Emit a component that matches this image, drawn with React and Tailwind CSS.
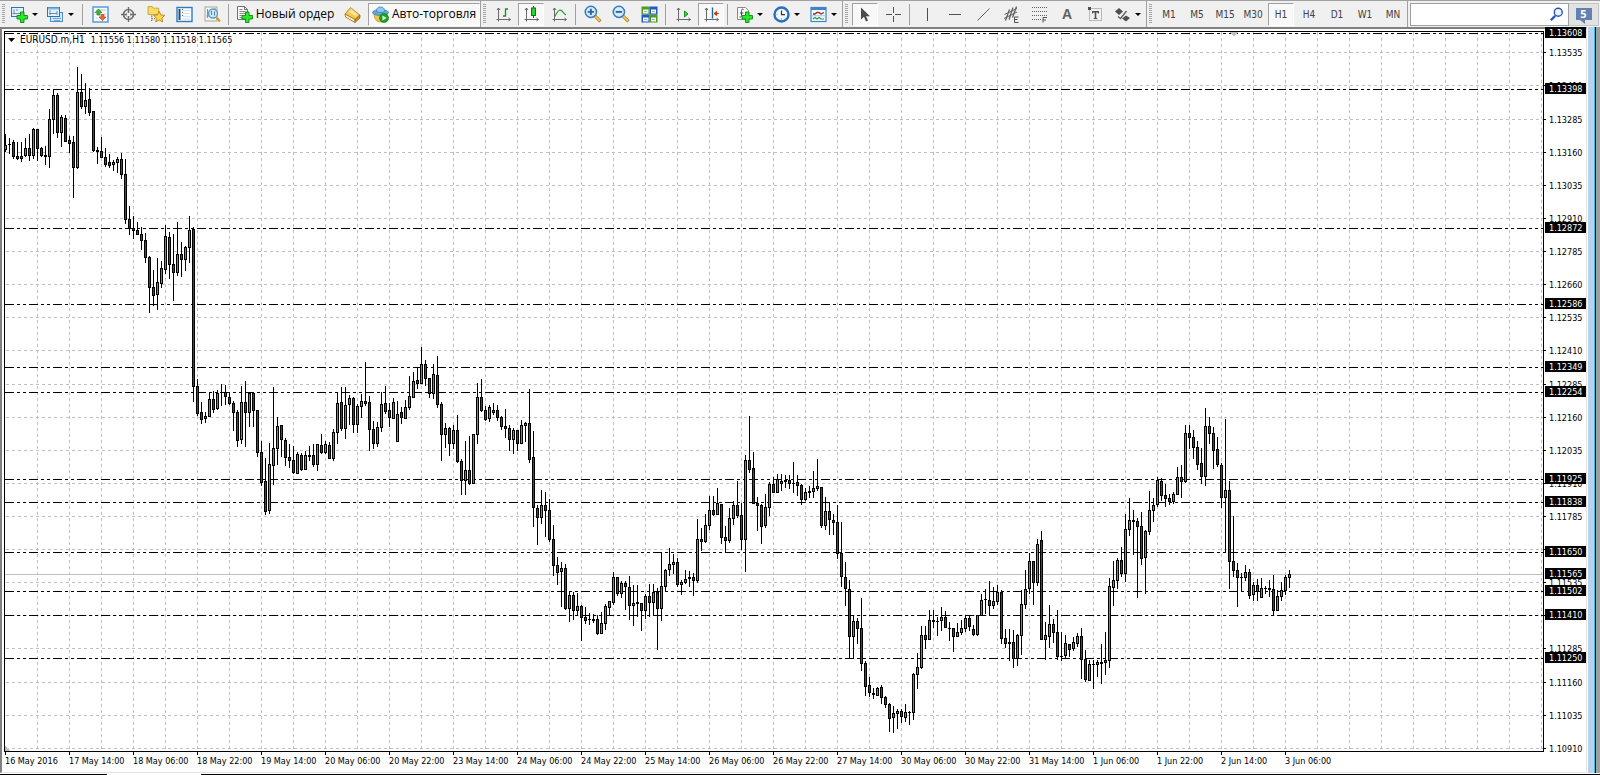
import clsx from "clsx";

const UI_FONT = "font-['Open_Sans','Noto_Sans',sans-serif]";
const CHART_FONT = "font-['DejaVu_Sans_Condensed','DejaVu_Sans',sans-serif]";

// Plot origin on the canvas, all bar values below are canvas pixels
const LEFT = 5;
const TOP = 32;
const BAR_STEP = 4;

// [high, body top, body bottom, low, up]
const BARS = [
    [134, 145, 149, 151, 1], [138, 144, 144, 153, 0], [140, 142, 156, 158, 0], [142, 156, 158, 159, 0],
    [142, 156, 158, 161, 1], [138, 148, 155, 156, 1], [134, 148, 155, 160, 0], [128, 129, 155, 158, 1],
    [129, 129, 148, 160, 0], [147, 148, 155, 156, 0], [146, 155, 156, 164, 0], [109, 119, 156, 167, 1],
    [89, 95, 119, 133, 1], [93, 95, 132, 137, 0], [115, 117, 132, 146, 1], [115, 118, 141, 141, 0],
    [136, 140, 143, 152, 0], [136, 142, 167, 197, 0], [67, 92, 167, 168, 1], [74, 92, 106, 108, 0],
    [83, 100, 106, 113, 1], [88, 99, 112, 115, 0], [111, 111, 150, 151, 0], [147, 150, 151, 163, 0],
    [137, 151, 157, 157, 0], [148, 157, 164, 166, 0], [154, 162, 165, 167, 0], [160, 162, 164, 170, 1],
    [157, 159, 162, 172, 1], [153, 159, 174, 178, 0], [159, 174, 219, 223, 0], [206, 219, 228, 234, 0],
    [216, 228, 230, 238, 0], [222, 230, 234, 234, 0], [227, 234, 240, 249, 0], [233, 240, 257, 262, 0],
    [256, 257, 287, 312, 0], [270, 287, 295, 305, 0], [258, 282, 294, 309, 1], [261, 268, 283, 287, 1],
    [225, 236, 269, 273, 1], [232, 237, 264, 278, 0], [234, 264, 272, 300, 0], [222, 254, 272, 275, 1],
    [242, 254, 259, 276, 0], [246, 247, 259, 270, 1], [216, 230, 247, 262, 1], [227, 229, 386, 401, 0],
    [379, 386, 413, 415, 0], [402, 412, 419, 423, 0], [412, 416, 418, 422, 1], [392, 399, 416, 416, 1],
    [391, 399, 409, 412, 0], [390, 393, 408, 409, 1], [384, 392, 392, 405, 0], [385, 392, 396, 404, 0],
    [393, 397, 403, 404, 0], [401, 403, 412, 430, 0], [410, 412, 440, 446, 0], [386, 402, 439, 443, 1],
    [381, 402, 412, 446, 0], [393, 393, 412, 426, 1], [392, 393, 410, 426, 0], [410, 410, 452, 456, 0],
    [441, 452, 482, 485, 0], [458, 481, 511, 514, 0], [443, 464, 510, 513, 1], [387, 448, 465, 484, 1],
    [417, 426, 448, 464, 1], [425, 425, 439, 456, 0], [438, 440, 457, 465, 0], [444, 457, 460, 467, 0],
    [446, 460, 472, 473, 0], [452, 454, 473, 473, 1], [453, 455, 469, 470, 0], [451, 455, 469, 469, 1],
    [446, 455, 456, 460, 0], [444, 455, 464, 466, 0], [444, 444, 464, 470, 1], [434, 445, 452, 453, 0],
    [441, 444, 452, 453, 1], [442, 445, 458, 458, 0], [429, 432, 458, 460, 1], [392, 403, 432, 443, 1],
    [387, 402, 428, 430, 0], [387, 405, 428, 438, 1], [395, 398, 404, 424, 1], [397, 398, 424, 432, 0],
    [404, 406, 424, 432, 1], [394, 401, 406, 417, 1], [362, 401, 403, 405, 0], [396, 402, 429, 450, 0],
    [421, 429, 443, 448, 0], [422, 427, 443, 446, 1], [392, 404, 427, 431, 1], [386, 403, 411, 413, 0],
    [403, 410, 417, 426, 0], [398, 402, 418, 418, 1], [401, 414, 441, 441, 1], [407, 412, 417, 423, 0],
    [400, 407, 418, 418, 1], [376, 396, 407, 409, 1], [372, 381, 397, 397, 1], [368, 380, 383, 388, 0],
    [347, 364, 383, 383, 1], [360, 364, 378, 385, 0], [378, 378, 393, 397, 0], [364, 374, 393, 398, 1],
    [356, 375, 404, 407, 0], [402, 404, 434, 460, 0], [423, 428, 434, 447, 1], [427, 428, 443, 455, 0],
    [425, 430, 443, 448, 1], [415, 430, 461, 462, 0], [459, 461, 480, 494, 0], [441, 470, 480, 494, 1],
    [436, 470, 483, 484, 0], [434, 434, 483, 483, 1], [383, 397, 434, 443, 1], [379, 397, 410, 411, 0],
    [406, 410, 419, 420, 0], [405, 407, 418, 421, 1], [403, 410, 412, 414, 1], [405, 410, 417, 420, 0],
    [416, 417, 426, 429, 0], [409, 426, 428, 437, 0], [425, 428, 439, 450, 0], [428, 430, 439, 453, 1],
    [430, 430, 443, 450, 0], [420, 425, 443, 443, 1], [422, 423, 425, 441, 1], [389, 423, 459, 462, 0],
    [431, 457, 507, 526, 0], [505, 508, 517, 544, 0], [490, 505, 517, 523, 1], [492, 505, 510, 536, 0],
    [499, 510, 539, 541, 0], [525, 539, 565, 575, 0], [557, 565, 572, 584, 0], [562, 568, 571, 606, 1],
    [564, 568, 608, 609, 0], [591, 595, 608, 621, 1], [592, 595, 610, 619, 0], [593, 606, 610, 615, 1],
    [605, 606, 617, 640, 0], [607, 617, 620, 623, 0], [613, 619, 619, 624, 0], [614, 619, 620, 622, 0],
    [615, 619, 633, 634, 0], [612, 623, 633, 633, 1], [604, 606, 623, 629, 1], [601, 601, 607, 615, 1],
    [572, 577, 602, 604, 1], [577, 577, 593, 595, 0], [581, 583, 593, 597, 1], [581, 583, 586, 609, 0],
    [576, 587, 605, 619, 0], [585, 603, 605, 625, 1], [585, 602, 603, 616, 0], [603, 603, 610, 630, 0],
    [594, 596, 610, 618, 1], [584, 596, 602, 616, 0], [584, 592, 602, 615, 1], [588, 592, 608, 649, 0],
    [552, 586, 608, 620, 1], [569, 570, 586, 591, 1], [548, 564, 569, 575, 1], [554, 562, 564, 573, 1],
    [558, 562, 584, 586, 0], [580, 582, 584, 594, 1], [570, 579, 582, 583, 1], [571, 577, 578, 586, 0],
    [573, 577, 580, 595, 0], [519, 539, 580, 582, 1], [528, 539, 541, 550, 0], [514, 525, 541, 542, 1],
    [496, 510, 525, 529, 1], [496, 510, 514, 515, 0], [488, 503, 514, 514, 1], [504, 504, 537, 543, 0],
    [526, 537, 540, 551, 0], [508, 518, 540, 542, 1], [501, 505, 518, 524, 1], [481, 505, 515, 517, 0],
    [503, 515, 539, 549, 0], [455, 460, 539, 571, 1], [416, 460, 469, 472, 0], [452, 468, 503, 503, 0],
    [497, 503, 505, 530, 0], [504, 505, 526, 543, 0], [494, 507, 525, 527, 1], [482, 484, 507, 515, 1],
    [477, 484, 492, 492, 0], [474, 479, 492, 492, 1], [474, 481, 483, 490, 1], [475, 480, 481, 487, 0],
    [475, 480, 483, 488, 0], [462, 483, 483, 492, 0], [475, 482, 485, 495, 0], [484, 485, 499, 504, 0],
    [488, 492, 499, 500, 1], [486, 491, 492, 497, 0], [471, 488, 491, 497, 1], [459, 486, 488, 490, 1],
    [487, 487, 525, 527, 0], [497, 511, 525, 529, 1], [502, 511, 519, 534, 0], [514, 520, 522, 534, 0],
    [505, 522, 553, 558, 0], [522, 553, 576, 586, 0], [562, 577, 588, 605, 0], [580, 589, 636, 658, 0],
    [615, 621, 636, 658, 1], [618, 621, 628, 643, 0], [598, 628, 663, 670, 0], [661, 663, 686, 695, 0],
    [677, 685, 692, 696, 0], [688, 693, 694, 698, 0], [687, 688, 695, 695, 1], [685, 687, 697, 703, 0],
    [696, 697, 704, 707, 0], [703, 704, 718, 731, 0], [706, 713, 717, 732, 1], [709, 711, 713, 728, 1],
    [709, 711, 716, 722, 0], [704, 712, 717, 721, 1], [711, 712, 712, 724, 0], [673, 674, 712, 719, 1],
    [653, 667, 674, 688, 1], [626, 635, 667, 668, 1], [626, 635, 639, 648, 0], [610, 620, 639, 639, 1],
    [610, 620, 621, 627, 0], [617, 621, 621, 635, 0], [607, 617, 620, 630, 1], [611, 617, 627, 627, 0],
    [622, 628, 628, 640, 0], [628, 628, 636, 651, 0], [623, 632, 636, 636, 1], [620, 628, 632, 634, 1],
    [615, 618, 628, 631, 1], [615, 618, 626, 630, 0], [625, 629, 634, 635, 0], [615, 615, 634, 635, 1],
    [594, 600, 615, 615, 1], [589, 599, 599, 613, 0], [581, 600, 605, 615, 0], [587, 601, 605, 608, 1],
    [585, 592, 601, 604, 1], [590, 592, 638, 643, 0], [629, 638, 643, 647, 0], [629, 642, 643, 660, 0],
    [630, 642, 658, 667, 0], [634, 635, 658, 665, 1], [590, 604, 635, 654, 1], [570, 589, 604, 608, 1],
    [553, 561, 588, 593, 1], [561, 561, 582, 604, 0], [539, 544, 582, 585, 1], [531, 540, 639, 639, 0],
    [622, 635, 639, 659, 1], [605, 624, 636, 647, 1], [619, 624, 632, 642, 0], [610, 632, 656, 659, 0],
    [632, 656, 656, 660, 0], [635, 643, 655, 657, 1], [644, 644, 649, 656, 0], [637, 642, 648, 650, 1],
    [633, 636, 643, 646, 1], [628, 636, 659, 678, 0], [650, 659, 679, 681, 0], [660, 664, 680, 680, 1],
    [660, 664, 664, 688, 0], [660, 662, 664, 676, 1], [644, 662, 663, 683, 0], [632, 660, 662, 674, 1],
    [578, 586, 660, 667, 1], [561, 580, 587, 605, 1], [558, 560, 580, 588, 1], [547, 560, 573, 576, 0],
    [514, 529, 573, 581, 1], [498, 520, 529, 535, 1], [510, 520, 521, 554, 0], [518, 521, 526, 597, 0],
    [512, 526, 558, 564, 0], [530, 531, 557, 593, 1], [491, 510, 531, 534, 1], [498, 505, 510, 521, 1],
    [477, 480, 504, 506, 1], [478, 481, 495, 500, 0], [484, 495, 498, 506, 0], [494, 498, 501, 504, 0],
    [492, 494, 501, 503, 1], [467, 477, 494, 494, 1], [465, 477, 481, 497, 0], [425, 433, 481, 482, 1],
    [425, 433, 437, 448, 0], [430, 437, 447, 458, 0], [441, 447, 464, 469, 0], [448, 463, 476, 483, 0],
    [408, 426, 476, 485, 1], [417, 426, 433, 443, 0], [427, 433, 450, 468, 0], [437, 449, 464, 466, 0],
    [463, 465, 497, 507, 0], [419, 490, 497, 552, 1], [481, 490, 561, 588, 0], [516, 561, 570, 576, 0],
    [563, 570, 577, 606, 0], [573, 577, 577, 591, 0], [565, 572, 577, 580, 1], [569, 572, 595, 598, 0],
    [582, 585, 594, 600, 1], [579, 585, 591, 600, 0], [578, 588, 597, 597, 1], [586, 588, 588, 593, 0],
    [580, 588, 589, 596, 0], [575, 589, 610, 614, 0], [590, 596, 610, 610, 1], [582, 590, 596, 600, 1],
    [575, 577, 590, 594, 1], [570, 574, 577, 587, 1],
];

const PRICES = [
    ["1.13535", 52], ["1.13410", 85], ["1.13285", 119], ["1.13160", 152], ["1.13035", 185],
    ["1.12910", 218], ["1.12785", 251], ["1.12660", 284], ["1.12535", 317], ["1.12410", 350],
    ["1.12285", 384], ["1.12160", 417], ["1.12035", 450], ["1.11910", 483], ["1.11785", 516],
    ["1.11660", 549], ["1.11535", 582], ["1.11410", 615], ["1.11285", 648], ["1.11160", 682],
    ["1.11035", 715], ["1.10910", 748],
];

const LEVELS = [
    ["1.13608", 33], ["1.13398", 89], ["1.12872", 228], ["1.12586", 304], ["1.12349", 367],
    ["1.12254", 392], ["1.11925", 479], ["1.11838", 502], ["1.11650", 552], ["1.11502", 591],
    ["1.11410", 615], ["1.11250", 658],
];

const BID = ["1.11565", 574];

const TIMES = [
    "16 May 2016", "17 May 14:00", "18 May 06:00", "18 May 22:00", "19 May 14:00", "20 May 06:00",
    "20 May 22:00", "23 May 14:00", "24 May 06:00", "24 May 22:00", "25 May 14:00", "26 May 06:00",
    "26 May 22:00", "27 May 14:00", "30 May 06:00", "30 May 22:00", "31 May 14:00", "1 Jun 06:00",
    "1 Jun 22:00", "2 Jun 14:00", "3 Jun 06:00",
];

const PERIODS = ["M1", "M5", "M15", "M30", "H1", "H4", "D1", "W1", "MN"];

/* ---------- toolbar parts ---------- */

function Svg({ children, size = 17 }) {
    return (
        <svg width={size} height={size} viewBox="0 0 17 17" fill="none" className="shrink-0" aria-hidden="true">
            {children}
        </svg>
    );
}

function Tool({ label, active, className = "w-7", children }) {
    return (
        <button
            type="button"
            aria-label={label}
            aria-pressed={active}
            className={clsx(
                "flex h-[23px] shrink-0 items-center justify-center",
                className,
                active && "border border-t-[#a0a0a0] border-l-[#a0a0a0] border-r-white border-b-white bg-[#f8f8f8]"
            )}
        >
            {children}
        </button>
    );
}

function DropTool({ label, className = "w-[37px] pl-[5px]", children }) {
    return (
        <button type="button" aria-label={label} className={clsx("flex h-[23px] shrink-0 items-center gap-1", className)}>
            {children}
            <svg width="6" height="3" viewBox="0 0 6 3" className="shrink-0" aria-hidden="true">
                <path d="M0 0h6L3 3z" fill="#000" />
            </svg>
        </button>
    );
}

function Grip() {
    return (
        <svg width="8" height="20" viewBox="0 0 8 20" className="shrink-0" shapeRendering="crispEdges" aria-hidden="true">
            {Array.from({ length: 10 }, (_, i) => (
                <path key={i} d={`M2 ${i * 2}.5h3`} stroke="#a6a6a6" />
            ))}
        </svg>
    );
}

function Separator() {
    return <span className="mx-0.5 h-[21px] w-0.5 shrink-0 border-l border-[#a0a0a0]" />;
}

function Group({ children }) {
    return <div className="flex h-full shrink-0 items-center border-r border-[#a0a0a0]">{children}</div>;
}

/* ---------- icons ---------- */

const GreenPlus = () => (
    <path d="M9.500 6h3.500v3.500h3.500v3.500h-3.500v3.500h-3.500v-3.500h-3.500v-3.500h3.500z" fill="#2ee62e" stroke="#0a8a0a" strokeWidth=".9" />
);

const NewChartIcon = () => (
    <Svg>
        <rect x=".5" y="1.500" width="12" height="9" fill="#e4f1fb" stroke="#2a77b8" />
        <path d="M3 3.500v5M1.500 7.500h8M5 4h2" stroke="#5d93bd" />
        <GreenPlus />
    </Svg>
);

const ProfilesIcon = () => (
    <Svg>
        <rect x="3.500" y="6.500" width="12" height="9" fill="#cfe6f8" stroke="#4a8fc6" />
        <rect x=".5" y="1.500" width="12" height="9" fill="#e4f1fb" stroke="#2a77b8" />
        <path d="M1 2.500h11" stroke="#7db5e0" strokeWidth="2" />
        <path d="M3 4v5M2 7.500h8M10 5v4" stroke="#5d93bd" />
        <path d="M6 12.500h8M7 14.500h6" stroke="#7aa9cf" />
    </Svg>
);

const MarketWatchIcon = () => (
    <Svg>
        <rect x="1" y="1" width="15" height="15" fill="#f8fbfe" stroke="#5b9bd5" strokeWidth="1.500" />
        <path d="M4 4h1M7 4h7M4 12h1M4 8h1M12 8h2" stroke="#b8c4d0" />
        <path d="M6.500 3l3.500 3.500H8V9H5V6.500H3z" fill="#3dbb30" stroke="#1d7a14" strokeWidth=".6" />
        <path d="M10.500 14.500L7 11h2V8.500h3V11h2z" fill="#f0683a" stroke="#b3350e" strokeWidth=".6" />
    </Svg>
);

const DataWindowIcon = () => (
    <Svg>
        <circle cx="8.500" cy="8.500" r="5" stroke="#6b6b6b" strokeWidth="1.600" />
        <circle cx="8.500" cy="8.500" r="2.500" stroke="#c4c4c4" />
        <path d="M8.500 1v6M8.500 10v6M1 8.500h6M10 8.500h6" stroke="#6b6b6b" strokeWidth="1.300" />
    </Svg>
);

const NavigatorIcon = () => (
    <Svg size={18}>
        <path d="M1 1.500h4l1 1.500h5v6H1z" fill="#f6dc6c" stroke="#c79c22" strokeWidth=".8" />
        <path d="M4.500 10v6M4.500 13h3" stroke="#555" strokeDasharray="1 1" />
        <path d="M11.500 6l1.600 3.400 3.700.4-2.800 2.500.8 3.700-3.300-1.900-3.300 1.900.8-3.700-2.800-2.500 3.700-.4z" fill="#ffd84a" stroke="#b07a12" strokeWidth=".8" />
    </Svg>
);

const TerminalIcon = () => (
    <Svg>
        <rect x="1" y="1.500" width="15" height="14" fill="#f6fbff" stroke="#2f7cc0" strokeWidth="1.400" />
        <path d="M3.500 3v11" stroke="#274a6d" strokeWidth="2" />
        <path d="M7 4.500h7M7 7.500h7M7 10.500h7M7 13h7" stroke="#d3e4f3" />
        <path d="M6 3.500h.8M6 6.500h.8M6 9.500h.8" stroke="#333" />
    </Svg>
);

const TesterIcon = () => (
    <Svg>
        <rect x="1" y="1" width="12" height="14" fill="#f4f4f0" stroke="#a7a79c" />
        <path d="M3.500 3v9M2.500 10h3M11 2v4" stroke="#8d8d8d" />
        <circle cx="9" cy="7.500" r="4.500" fill="#c7e2f5" fillOpacity=".85" stroke="#5b9bc9" strokeWidth="1.300" />
        <path d="M7.500 5v4M10.500 5.500v4" stroke="#5f7f99" />
        <path d="M12.500 11.500l3.500 4" stroke="#d99a25" strokeWidth="2.200" />
    </Svg>
);

const NewOrderIcon = () => (
    <Svg>
        <path d="M1.500 .5h7l3 3v10h-10z" fill="#fafafa" stroke="#707070" />
        <path d="M8.500 .5v3h3" stroke="#707070" />
        <path d="M3.500 3.500h3M3.500 5.500h6M3.500 7.500h6M3.500 9.500h3M3.500 11.500h3" stroke="#8a8a8a" />
        <GreenPlus />
    </Svg>
);

const MetaEditorIcon = () => (
    <Svg>
        <path d="M6.500 1.500L16 9l-5 4.500L1 8z" fill="#f3cb52" stroke="#a8741a" strokeWidth=".7" />
        <path d="M7 3l6.500 5.200-2 2L5 6z" fill="#fbe596" />
        <path d="M1 8l10 5.500v3L1.500 11z" fill="#fff3cf" stroke="#9a6710" strokeWidth=".8" />
        <path d="M11 13.500L16 9v3l-5 4.500z" fill="#c98c1d" stroke="#9a6710" strokeWidth=".7" />
    </Svg>
);

const ExpertsIcon = () => (
    <Svg>
        <path d="M2 7.500C2 13 5 16 8.500 16S15 13 15 7.500z" fill="#f3c64c" stroke="#b98718" strokeWidth=".7" />
        <ellipse cx="8.500" cy="6.500" rx="8" ry="3" fill="#5fa9d6" stroke="#2f78a8" strokeWidth=".7" />
        <path d="M4.500 5.500C4.500 2 6 1 8.500 1s4 1 4 4.500c-2 1.200-6 1.200-8 0z" fill="#8ccbee" stroke="#2f78a8" strokeWidth=".7" />
        <circle cx="12" cy="12" r="4.500" fill="#16a81c" stroke="#0c7011" strokeWidth=".6" />
        <path d="M10.500 9.500l4 2.500-4 2.500z" fill="#fff" />
    </Svg>
);

const Axes = () => <path d="M3.500 2v13.500M1.500 13.500h14M2 4l1.500-2L5 4M13.500 12l2 1.500-2 1.500" stroke="#6a6a6a" />;

const BarsIcon = () => (
    <Svg>
        <Axes />
        <path d="M10.500 2.500v8M10.500 3h2.500M8 10h2.500" stroke="#169016" strokeWidth="1.300" />
    </Svg>
);

const CandlesIcon = () => (
    <Svg>
        <Axes />
        <path d="M10.500 0v12" stroke="#0a6e0a" />
        <rect x="8.500" y="2" width="4" height="7.500" fill="#2bd22b" stroke="#0a7e0a" />
    </Svg>
);

const LineIcon = () => (
    <Svg>
        <Axes />
        <path d="M3.500 11C7 4 9 3 11 5s2 3 4 4" stroke="#2a9e2a" strokeWidth="1.200" />
    </Svg>
);

const ZoomIcon = ({ plus }) => (
    <Svg size={18}>
        <path d="M10.500 10.500l5 5" stroke="#b07a1c" strokeWidth="3" />
        <path d="M10.500 10.500l4.500 4.500" stroke="#f3cb5e" strokeWidth="1.600" />
        <circle cx="6.500" cy="6.500" r="5.300" fill="#d6ecfb" stroke="#3579bd" strokeWidth="1.400" />
        <path d={plus ? "M3.500 6.500h6M6.500 3.500v6" : "M3.500 6.500h6"} stroke="#2b66a8" strokeWidth="1.800" />
    </Svg>
);

const TileIcon = () => (
    <Svg>
        <path d="M.5 .5h8v8h-8zM8.500 8.500h8v8h-8z" fill="#4c9c1c" />
        <path d="M8.500 .5h8v8h-8zM.5 8.500h8v8h-8z" fill="#2559c4" />
        <path d="M2 3.500h5.500v4H2zM10 3.500h5v4h-5zM2 11.500h5.500v4H2zM10 11.500h5v4h-5z" fill="#f2f6fc" />
        <path d="M3 5.500h3.500M11 5.500h3M3 13.500h3.500M11 13.500h3" stroke="#9ab6d8" />
    </Svg>
);

const AutoScrollIcon = () => (
    <Svg>
        <Axes />
        <path d="M9.500 5v6l3.500-3z" fill="#3fd43f" stroke="#0f8a0f" strokeWidth=".9" />
    </Svg>
);

const ShiftIcon = () => (
    <Svg>
        <Axes />
        <path d="M9.500 1.500v11" stroke="#1d6898" strokeWidth="1.400" />
        <path d="M16 7.500h-4M13.500 5.500l-2.500 2 2.500 2z" stroke="#c23a10" fill="#c23a10" />
    </Svg>
);

const IndicatorsIcon = () => (
    <Svg>
        <path d="M1.500 1.500h8l3 3v9h-11z" fill="#fdfdfd" stroke="#8a8a8a" />
        <path d="M7.500 3.500c-1.500-1-2 0-2 2v4c0 1.500-1 2-2 1.500M4 7h3.500" stroke="#444" />
        <GreenPlus />
    </Svg>
);

const ClockIcon = () => (
    <Svg>
        <circle cx="8.500" cy="8.500" r="7" fill="#f4f9fe" stroke="#2870c4" strokeWidth="2.400" />
        <path d="M8.500 4.500v4.200h3.500" stroke="#333" strokeWidth="1.200" />
        <path d="M8.500 12.500v1M3.500 8.500h1" stroke="#888" />
    </Svg>
);

const TemplateIcon = () => (
    <Svg>
        <rect x="1" y="1.500" width="15" height="14" fill="#f6fbff" stroke="#3c86c8" strokeWidth="1.200" />
        <path d="M1 2.500h15" stroke="#3c86c8" strokeWidth="3" />
        <path d="M3 8h2l2-1.500h2L11 8l3-1.500" stroke="#9c2d16" strokeWidth="1.300" />
        <path d="M3 13l2-1.500L7 13l2-1.500 2 1.500h3" stroke="#269a3c" strokeWidth="1.100" />
        <path d="M1.500 9.800h14" stroke="#9cc4e6" />
    </Svg>
);

const PointerIcon = () => (
    <Svg>
        <path d="M4 1.500v12l3-2.700 2 4.700 2-1-2-4.300h4z" fill="#4c4c4c" />
    </Svg>
);

const CrossIcon = () => (
    <Svg>
        <path d="M8.500 1v6M8.500 10v6M1 8.500h6M10 8.500h6" stroke="#505050" />
    </Svg>
);

const VLineIcon = () => (
    <Svg>
        <path d="M8.500 2v13" stroke="#505050" />
    </Svg>
);

const HLineIcon = () => (
    <Svg>
        <path d="M2 8.500h12" stroke="#505050" />
    </Svg>
);

const TrendIcon = () => (
    <Svg>
        <path d="M2.500 14.500l12-12" stroke="#606060" />
    </Svg>
);

const ChannelIcon = () => (
    <Svg>
        <path d="M1.500 8.500L14 2.500M1 12.500L14 6" stroke="#606060" />
        <path d="M2.500 14.500l4-11M6 13.500l4-12M9.500 11.500l4-11" stroke="#606060" strokeWidth="1.300" />
        <path d="M15.500 11h-4v5.500h4M11.500 13.500h3" stroke="#505050" />
    </Svg>
);

const FiboIcon = () => (
    <Svg>
        <path d="M1 1.500h15M1 5.500h15M1 9.500h15M1 13.500h9" stroke="#606060" strokeDasharray="1 1" />
        <path d="M16 11.500h-4v5M12 14h3" stroke="#505050" />
    </Svg>
);

const LabelIcon = () => (
    <Svg>
        <rect x="2.500" y="2.500" width="12" height="12" stroke="#808080" strokeDasharray="1 1" />
        <path d="M1 1h3v3H1z" fill="#505050" />
        <path d="M5 5h7v2.500h-1l-.5-1H9.300V12h1v1H6.700v-1h1V6.500H6.500l-.5 1H5z" fill="#505050" />
    </Svg>
);

const ArrowsIcon = () => (
    <Svg>
        <path d="M5 2l4 3.500-4 3.500-4-3.500zM12 9.500l4 2.500-4 3.500-4-3z" fill="#505050" />
        <path d="M4 10.500l2.500 2 6-7.500" stroke="#606060" strokeWidth="1.300" />
    </Svg>
);

const SearchIcon = () => (
    <Svg size={15}>
        <path d="M7 10l-5 5" stroke="#2355c0" strokeWidth="2.600" />
        <circle cx="10.500" cy="6" r="4.500" fill="#eef4fd" stroke="#2355c0" strokeWidth="1.600" />
    </Svg>
);

/* ---------- toolbar ---------- */

function Toolbar() {
    return (
        <div className={clsx("flex h-[27px] shrink-0 items-center border-t border-[#a0a0a0] bg-[#f0f0f0]", UI_FONT)}>
            <Group>
                <Grip />
                <DropTool label="New chart" className="w-9 pl-[3px]"><NewChartIcon /></DropTool>
                <DropTool label="Profiles" className="w-9 pl-[3px]"><ProfilesIcon /></DropTool>
                <Separator />
                <Tool label="Market watch"><MarketWatchIcon /></Tool>
                <Tool label="Data window"><DataWindowIcon /></Tool>
                <Tool label="Navigator"><NavigatorIcon /></Tool>
                <Tool label="Terminal"><TerminalIcon /></Tool>
                <Tool label="Strategy tester"><TesterIcon /></Tool>
                <Separator />
                <Tool className="w-[106px] gap-[3px]">
                    <NewOrderIcon />
                    <span className="text-xs whitespace-nowrap text-black">Новый ордер</span>
                </Tool>
                <Tool label="MetaEditor"><MetaEditorIcon /></Tool>
                <Tool active className="ml-0.5 w-28 gap-[3px]">
                    <ExpertsIcon />
                    <span className="text-xs whitespace-nowrap text-black">Авто-торговля</span>
                </Tool>
            </Group>

            <Group>
                <Grip />
                <Tool label="Bar chart"><BarsIcon /></Tool>
                <Tool label="Candlesticks" active className="mx-px w-[26px]"><CandlesIcon /></Tool>
                <Tool label="Line chart"><LineIcon /></Tool>
                <Separator />
                <Tool label="Zoom in"><ZoomIcon plus /></Tool>
                <Tool label="Zoom out"><ZoomIcon /></Tool>
                <Tool label="Tile windows"><TileIcon /></Tool>
                <Separator />
                <Tool label="Auto scroll"><AutoScrollIcon /></Tool>
                <Tool label="Chart shift" active className="mx-px w-[26px]"><ShiftIcon /></Tool>
                <Separator />
                <DropTool label="Indicators"><IndicatorsIcon /></DropTool>
                <DropTool label="Periods"><ClockIcon /></DropTool>
                <DropTool label="Templates"><TemplateIcon /></DropTool>
            </Group>

            <Group>
                <Grip />
                <Tool label="Cursor" active className="mx-px w-[26px]"><PointerIcon /></Tool>
                <Tool label="Crosshair"><CrossIcon /></Tool>
                <Separator />
                <Tool label="Vertical line"><VLineIcon /></Tool>
                <Tool label="Horizontal line"><HLineIcon /></Tool>
                <Tool label="Trendline"><TrendIcon /></Tool>
                <Tool label="Equidistant channel"><ChannelIcon /></Tool>
                <Tool label="Fibonacci"><FiboIcon /></Tool>
                <Tool label="Text">
                    <span className="font-['Liberation_Sans',sans-serif] text-sm font-bold text-[#606060]">A</span>
                </Tool>
                <Tool label="Text label"><LabelIcon /></Tool>
                <DropTool label="Arrows"><ArrowsIcon /></DropTool>
            </Group>

            <Group>
                <Grip />
                {PERIODS.map((p) => (
                    <Tool key={p} active={p === "H1"} className={p === "H1" ? "mx-px w-[26px]" : "w-7"}>
                        <span className={clsx("text-[10px] text-[#404040]", CHART_FONT)}>{p}</span>
                    </Tool>
                ))}
            </Group>

            <label className="ml-0.5 flex h-[23px] min-w-0 flex-1 items-center border border-[#a0a0a0] bg-white pr-1">
                <input type="text" aria-label="Search" className="h-full min-w-0 flex-1 px-1 text-xs outline-none" />
                <SearchIcon />
            </label>
            <button type="button" aria-label="Messages" className="mr-px flex h-[23px] w-[30px] shrink-0 items-center justify-center border border-l-0 border-[#c4c4c4] bg-[#e2e2e2]">
                <span className="relative flex h-3 w-4 items-center justify-center bg-[#6480b0] text-[11px] leading-3 font-bold text-white">
                    5
                    <svg width="5" height="4" viewBox="0 0 5 4" className="absolute top-full left-1" aria-hidden="true">
                        <path d="M0 0h5v4z" fill="#6480b0" />
                    </svg>
                </span>
            </button>
        </div>
    );
}

/* ---------- chart ---------- */

function Candle({ x, bar }) {
    const [high, top, bottom, low, up] = bar;
    return (
        <g>
            <rect x={x} y={high} width="1" height={low - high + 1} />
            <rect x={x - 1} y={top} width="3" height={bottom - top + 1} />
            {bottom - top > 1 && (
                <rect x={x} y={top + 1} width="1" height={bottom - top - 1} fill={up ? "#32b43c" : "#e60000"} />
            )}
        </g>
    );
}

function Plot() {
    const columns = Array.from({ length: 80 }, (_, i) => LEFT + 32 * (i + 1));

    return (
        <div className="relative min-w-0 flex-1 border border-black">
            <svg className="absolute inset-0 h-full w-full" shapeRendering="crispEdges" role="img" aria-label="EURUSD H1">
                <g transform={`translate(${-LEFT} ${-TOP})`}>
                    <g stroke="#c0c0c0" strokeDasharray="3 3">
                        {columns.map((x) => (
                            <line key={x} x1={x + 0.5} x2={x + 0.5} y1={TOP} y2="200%" />
                        ))}
                        {PRICES.map(([price, y]) => (
                            <line key={price} x1={LEFT + 1} x2="200%" y1={y + 0.5} y2={y + 0.5} />
                        ))}
                    </g>
                    <line x1={LEFT} x2="200%" y1={BID[1] + 0.5} y2={BID[1] + 0.5} stroke="#c0c0c0" />
                    <g stroke="#000" strokeDasharray="9 3 3 3 3 3">
                        {LEVELS.map(([price, y]) => (
                            <line key={price} x1={LEFT} x2="200%" y1={y + 0.5} y2={y + 0.5} />
                        ))}
                    </g>
                    {BARS.map((bar, i) => (
                        <Candle key={i} x={LEFT + i * BAR_STEP} bar={bar} />
                    ))}
                    {/* shift marker and fixed-scale corner */}
                    <path d="M1229 32h9l-4.500 4.500zM5 746v5h5z" fill="#c0c0c0" />
                </g>
            </svg>
            <div className={clsx("relative flex items-center pt-0.5 pl-[3px] leading-3 text-black", CHART_FONT)}>
                <svg width="7" height="4" viewBox="0 0 7 4" className="mr-[5px]" aria-hidden="true">
                    <path d="M0 0h7L3.500 4z" fill="#000" />
                </svg>
                <span className="mr-1.5 text-[10px]">EURUSD.m,H1</span>
                <span className="text-[9px]">1.11556 1.11580 1.11518 1.11565</span>
            </div>
        </div>
    );
}

function PriceScale() {
    return (
        <div className="w-[42px] shrink-0">
            <svg className={clsx("h-full w-full overflow-visible text-[9px]", CHART_FONT)} role="img" aria-label="Price scale">
                <g transform={`translate(0 ${1 - TOP})`}>
                    {PRICES.map(([price, y]) => (
                        <g key={price}>
                            <rect x="0" y={y} width="2" height="1" />
                            <text x="5" y={y + 4}>{price}</text>
                        </g>
                    ))}
                    {[...LEVELS, BID].map(([price, y]) => (
                        <g key={price}>
                            <rect x="1" y={y - 6} width="41" height="11" />
                            <text x="5" y={y + 3} fill="#fff">{price}</text>
                        </g>
                    ))}
                </g>
            </svg>
        </div>
    );
}

function TimeScale() {
    return (
        <div className={clsx("flex h-5 shrink-0 overflow-hidden pl-px text-[9px] text-black", CHART_FONT)}>
            {TIMES.map((time) => (
                <div key={time} className="w-16 shrink-0">
                    <div className="h-[3px] w-px bg-black" />
                    <div className="leading-3 whitespace-nowrap">{time}</div>
                </div>
            ))}
        </div>
    );
}

export default function App() {
    return (
        <div className="flex h-screen flex-col overflow-hidden bg-white">
            <Toolbar />
            <div className="flex min-h-0 flex-1">
                <main className="flex min-w-0 flex-1 flex-col border-t-2 border-l-2 border-t-[#808080] border-l-[#808080] border-r border-b border-r-[#e3e3e3] border-b-[#e3e3e3] pt-0.5 pl-0.5">
                    <div className="flex min-h-0 flex-1">
                        <Plot />
                        <PriceScale />
                    </div>
                    <TimeScale />
                </main>
                <div className="ml-px w-1.5 shrink-0 bg-[#b9d1ea]" />
                <div className="w-0.5 shrink-0 border-r border-black bg-[#1fc8ee]" />
                <div className="w-1 shrink-0 bg-[#a0a0a0]" />
            </div>
            <div className="mt-px flex h-px shrink-0">
                <div className="w-[107px] bg-black" />
                <div className="w-[94px] bg-white" />
                <div className="flex-1 bg-black" />
            </div>
        </div>
    );
}
